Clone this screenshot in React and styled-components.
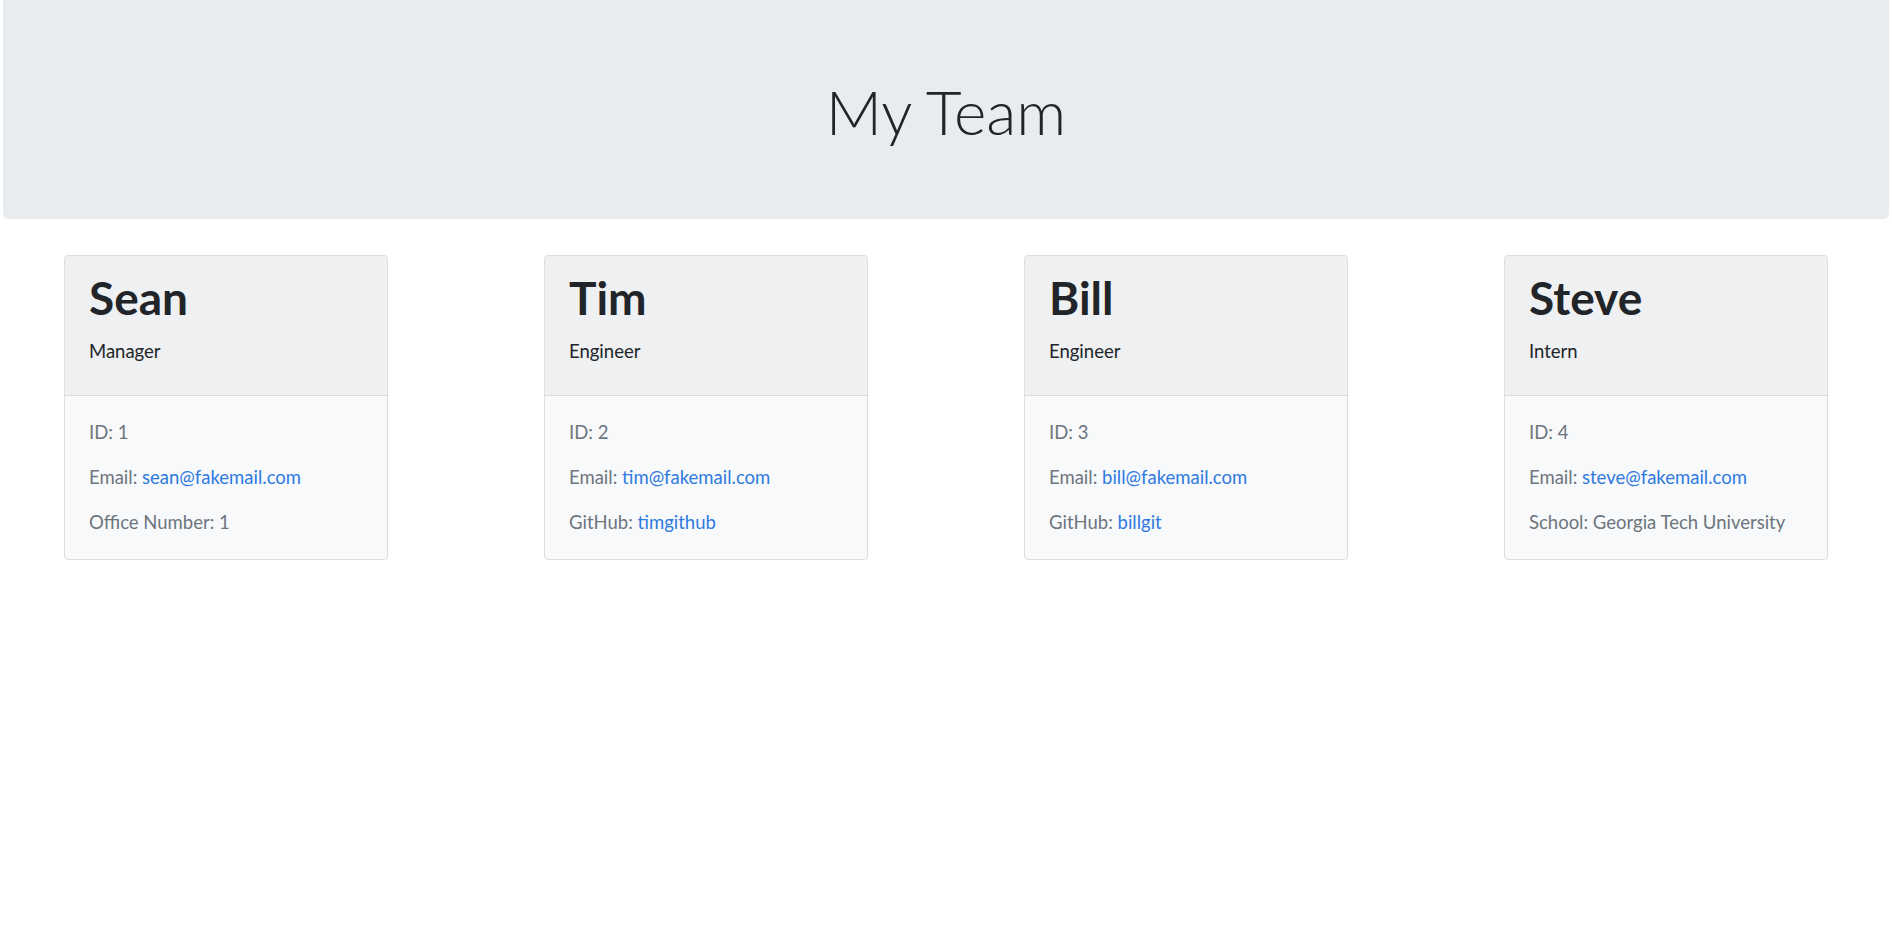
import React from "react";
import styled, { createGlobalStyle } from "styled-components";

const GlobalStyle = createGlobalStyle`
  html, body {
    margin: 0;
    padding: 0;
    background: #ffffff;
    font-family: Lato, "Open Sans", "Liberation Sans", sans-serif;
    color: #212529;
  }
`;

const Jumbotron = styled.header`
  height: 219px;
  margin: 0 3px;
  background-color: #e9ecef;
  border-radius: 0 0 5px 5px;
  display: flex;
  align-items: center;
  justify-content: center;
`;

const PageTitle = styled.h1`
  margin: 0;
  padding-top: 3px;
  font-size: 62px;
  font-weight: 300;
  line-height: 1.2;
  color: #212529;
`;

const CardRow = styled.main`
  display: flex;
  justify-content: space-between;
  align-items: flex-start;
  padding: 0 64px;
  margin-top: 36px;
`;

const Card = styled.section`
  width: 324px;
  box-sizing: border-box;
  border: 1px solid #dcdee0;
  border-radius: 4px;
  overflow: hidden;
  background-color: #f8f9fa;
`;

const CardHeader = styled.div`
  padding: 14px 24px 29px;
  background-color: #eff0f2;
  border-bottom: 1px solid #d6d8da;
`;

const Name = styled.h2`
  margin: 0 0 11px;
  font-size: 46px;
  font-weight: 700;
  line-height: 56px;
  color: #212529;
`;

const Role = styled.p`
  margin: 0;
  font-size: 18.5px;
  line-height: 28.8px;
  color: #212529;
`;

const CardBody = styled.div`
  padding: 22px 24px;
`;

const Detail = styled.p`
  margin: 0 0 16px;
  font-size: 18.5px;
  line-height: 29px;
  color: #6c757d;
  white-space: nowrap;

  &:last-child {
    margin-bottom: 0;
  }
`;

const DetailLink = styled.a`
  color: #2f7ae0;
  text-decoration: none;
`;

const team = [
  {
    name: "Sean",
    role: "Manager",
    id: 1,
    email: "sean@fakemail.com",
    extra: { label: "Office Number", value: "1" },
  },
  {
    name: "Tim",
    role: "Engineer",
    id: 2,
    email: "tim@fakemail.com",
    extra: { label: "GitHub", value: "timgithub", link: true },
  },
  {
    name: "Bill",
    role: "Engineer",
    id: 3,
    email: "bill@fakemail.com",
    extra: { label: "GitHub", value: "billgit", link: true },
  },
  {
    name: "Steve",
    role: "Intern",
    id: 4,
    email: "steve@fakemail.com",
    extra: { label: "School", value: "Georgia Tech University" },
  },
];

const EmployeeCard = ({ member }) => (
  <Card>
    <CardHeader>
      <Name>{member.name}</Name>
      <Role>{member.role}</Role>
    </CardHeader>
    <CardBody>
      <Detail>ID: {member.id}</Detail>
      <Detail>
        Email: <DetailLink href={`mailto:${member.email}`}>{member.email}</DetailLink>
      </Detail>
      <Detail>
        {member.extra.label}:{" "}
        {member.extra.link ? (
          <DetailLink href={`https://github.com/${member.extra.value}`}>
            {member.extra.value}
          </DetailLink>
        ) : (
          member.extra.value
        )}
      </Detail>
    </CardBody>
  </Card>
);

const App = () => {
  return (
    <>
      <GlobalStyle />
      <Jumbotron>
        <PageTitle>My Team</PageTitle>
      </Jumbotron>
      <CardRow>
        {team.map((member) => (
          <EmployeeCard key={member.id} member={member} />
        ))}
      </CardRow>
    </>
  );
};

export default App;
